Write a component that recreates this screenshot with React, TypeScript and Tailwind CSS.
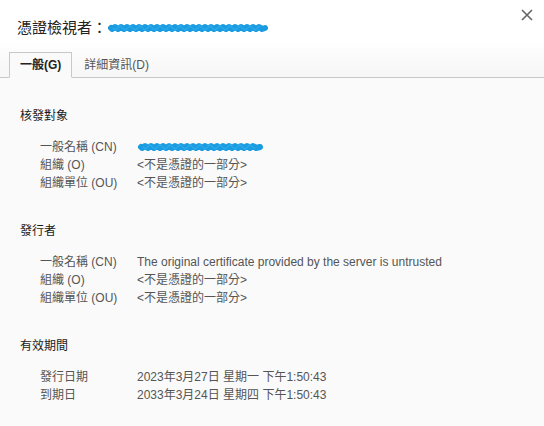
import React from 'react';

const Redacted: React.FC<{ width: number }> = ({ width }) => (
  <svg width={width} height="12" viewBox={`0 0 ${width} 12`} className="block">
    <path
      d={`M4 6 ${Array.from({ length: Math.floor((width - 8) / 3) }, (_, i) => `L${5 + i * 3} ${i % 2 ? 5 : 7}`).join(' ')} L${width - 4} 6`}
      stroke="#1b9be0"
      strokeWidth="6"
      strokeLinecap="round"
      strokeLinejoin="round"
      fill="none"
    />
    <path
      d={`M6 6 ${Array.from({ length: Math.floor((width - 12) / 5) }, (_, i) => `L${8 + i * 5} ${i % 2 ? 4 : 8}`).join(' ')}`}
      stroke="#2fb0ee"
      strokeWidth="1.5"
      fill="none"
      opacity="0.7"
    />
  </svg>
);

type Row = { label: string; value: React.ReactNode };

const Section: React.FC<{ title: string; rows: Row[] }> = ({ title, rows }) => (
  <div>
    <div className="text-[12px] text-[#1a1a1a] leading-[18px]">{title}</div>
    <div className="mt-[13px] pl-[20px]">
      {rows.map((r) => (
        <div key={r.label} className="flex h-[18px] items-center text-[12px] text-[#555]">
          <div className="w-[97px] shrink-0">{r.label}</div>
          <div>{r.value}</div>
        </div>
      ))}
    </div>
  </div>
);

const notPart = '<不是憑證的一部分>';

export default function App() {
  return (
    <div
      className="w-[544px] h-[426px] bg-[#fafafa] flex flex-col overflow-hidden"
      style={{ fontFamily: '"Liberation Sans", "Noto Sans CJK TC", sans-serif' }}
    >
      {/* Title */}
      <div className="bg-white h-[40px] flex items-start justify-between pl-[17px] pr-[11px]">
        <div className="flex items-center mt-[18px] text-[15px] text-[#222] leading-[20px]">
          <span>憑證檢視者：</span>
          <Redacted width={162} />
        </div>
        <svg width="12" height="12" viewBox="0 0 12 12" className="mt-[9px]">
          <path d="M1 1 L11 11 M11 1 L1 11" stroke="#666" strokeWidth="1.6" />
        </svg>
      </div>

      {/* Tabs */}
      <div className="h-[38px] bg-gradient-to-b from-white to-[#f6f6f6] border-b border-[#c8c8c8] flex items-end pl-[9px]">
        <div className="h-[26px] -mb-px px-[10px] flex items-center bg-[#fafafa] border border-[#c8c8c8] border-b-[#fafafa] text-[12px] font-bold text-[#222]">
          一般(G)
        </div>
        <div className="h-[25px] px-[12px] flex items-center text-[12px] text-[#555]">詳細資訊(D)</div>
      </div>

      {/* Body */}
      <div className="pl-[20px] pt-[29px] flex flex-col gap-[30px]">
        <Section
          title="核發對象"
          rows={[
            { label: '一般名稱 (CN)', value: <Redacted width={127} /> },
            { label: '組織 (O)', value: notPart },
            { label: '組織單位 (OU)', value: notPart },
          ]}
        />
        <Section
          title="發行者"
          rows={[
            { label: '一般名稱 (CN)', value: 'The original certificate provided by the server is untrusted' },
            { label: '組織 (O)', value: notPart },
            { label: '組織單位 (OU)', value: notPart },
          ]}
        />
        <Section
          title="有效期間"
          rows={[
            { label: '發行日期', value: '2023年3月27日 星期一 下午1:50:43' },
            { label: '到期日', value: '2033年3月24日 星期四 下午1:50:43' },
          ]}
        />
      </div>
    </div>
  );
}
